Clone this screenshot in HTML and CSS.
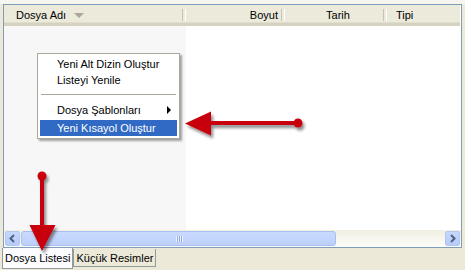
FILE: index.html
```html
<!DOCTYPE html>
<html>
<head>
<meta charset="utf-8">
<link rel="stylesheet" href="styles.css">
</head>
<body>
<div class="window">
  <div class="listview">
    <div class="header">
      <div class="col c-name">Dosya Adı <span class="sort"></span></div>
      <div class="col c-size">Boyut</div>
      <div class="col c-date">Tarih</div>
      <div class="col c-type">Tipi</div>
    </div>
    <div class="body">
      <div class="sorted"></div>
      <div class="rest"></div>
    </div>
    <div class="hscroll">
      <div class="btn left"><svg width="15" height="15" viewBox="0 0 15 15"><path d="M9 4 L5.5 7.5 L9 11" fill="none" stroke="#4d6185" stroke-width="2"/></svg></div>
      <div class="track">
        <div class="thumb"><span class="grip"></span></div>
      </div>
      <div class="btn right"><svg width="15" height="15" viewBox="0 0 15 15"><path d="M6 4 L9.5 7.5 L6 11" fill="none" stroke="#4d6185" stroke-width="2"/></svg></div>
    </div>
  </div>
  <div class="tabs">
    <div class="tab active">Dosya Listesi</div>
    <div class="tab">Küçük Resimler</div>
  </div>

  <div class="menu">
    <div class="item">Yeni Alt Dizin Oluştur</div>
    <div class="item">Listeyi Yenile</div>
    <div class="sep"></div>
    <div class="item sub">Dosya Şablonları <span class="subarrow"></span></div>
    <div class="item hl">Yeni Kısayol Oluştur</div>
  </div>

  <svg class="arrows" width="465" height="270" viewBox="0 0 465 270">
    <defs>
      <filter id="sh" x="-20%" y="-20%" width="140%" height="140%">
        <feGaussianBlur in="SourceAlpha" stdDeviation="1.6"/>
        <feOffset dx="2" dy="3"/>
        <feComponentTransfer><feFuncA type="linear" slope="0.45"/></feComponentTransfer>
        <feMerge><feMergeNode/><feMergeNode in="SourceGraphic"/></feMerge>
      </filter>
    </defs>
    <g filter="url(#sh)" fill="#c8000a">
      <rect x="205" y="121" width="93" height="4"/>
      <circle cx="298" cy="123" r="4.5"/>
      <path d="M185 123.5 L211 111.5 L211 135.5 Z"/>
      <rect x="40" y="176" width="4" height="52"/>
      <circle cx="42" cy="176" r="4.5"/>
      <path d="M42 251 L29.5 225 L55.5 225 Z"/>
    </g>
  </svg>
</div>
</body>
</html>
```
FILE: styles.css
```css
* { box-sizing: border-box; }
html, body { margin: 0; padding: 0; }
body {
  width: 465px;
  height: 270px;
  background: #ece9d8;
  font-family: Tahoma, "Liberation Sans", Arial, sans-serif;
  font-size: 11px;
  color: #000;
  overflow: hidden;
}
.window {
  position: relative;
  width: 465px;
  height: 270px;
  padding: 4px 3px 0 3px;
  background: linear-gradient(#f6f5ef 0 4px, #ece9d8 4px);
  display: flex;
  flex-direction: column;
}
.listview {
  height: 244px;
  border: 1px solid #7f9db9;
  background: #fff;
  display: flex;
  flex-direction: column;
}
.header {
  height: 21px;
  display: flex;
  background: #ebeadb;
  border-bottom: 3px solid #d6d2c2;
  box-shadow: inset 0 -1px 0 #e2decd;
  margin-right: 1px;
}
.col {
  display: flex;
  align-items: center;
  padding-top: 1px;
  position: relative;
}
.col::after {
  content: "";
  position: absolute;
  right: 0;
  top: 4px;
  bottom: 2px;
  width: 2px;
  border-left: 1px solid #c7c5b2;
  border-right: 1px solid #fff;
}
.c-name { width: 182px; padding-left: 12px; }
.c-size { width: 99px; justify-content: flex-end; padding-right: 7px; }
.c-date { width: 102px; justify-content: center; padding-left: 4px; }
.c-type { flex: 1; padding-left: 9px; }
.c-type::after { display: none; }
.sort {
  display: inline-block;
  width: 0; height: 0;
  margin-left: 8px;
  margin-top: 1px;
  border-left: 5px solid transparent;
  border-right: 5px solid transparent;
  border-top: 5px solid #aca899;
}
.body {
  flex: 1;
  display: flex;
}
.sorted { width: 182px; background: #f7f7f7; }
.rest { flex: 1; background: #fff; }
.hscroll {
  height: 17px;
  display: flex;
  align-items: center;
  padding: 1px;
  background: linear-gradient(#f1efe2, #fdfdfa);
}
.btn {
  width: 15px;
  height: 15px;
  border: 1px solid #b4c7f0;
  border-radius: 2px;
  background: linear-gradient(#c5d7fd, #b6cbf8);
  display: flex;
}
.btn svg { margin: -1px; }
.track {
  flex: 1;
  height: 15px;
  padding: 0 1px;
  display: flex;
}
.thumb {
  width: 315px;
  height: 15px;
  border: 1px solid #a9bff2;
  border-radius: 3px;
  background: linear-gradient(#c9dafd, #bcd0fb);
  position: relative;
}
.grip {
  position: absolute;
  left: 154px;
  top: 4px;
  width: 7px;
  height: 6px;
  background: repeating-linear-gradient(90deg, #eef3fe 0 1px, #8ea9e6 1px 2px);
}
.tabs {
  display: flex;
  height: 21px;
  margin-left: -1px;
}
.tab {
  height: 18px;
  padding: 0 2px;
  display: flex;
  align-items: center;
  border: 1px solid #919b9c;
  border-top: none;
  background: #ece9d8;
  margin-top: 1px;
}
.tab.active {
  background: #fcfcfe;
  height: 21px;
  margin-top: 0;
  padding: 0 2px 0 2px;
}
.menu {
  position: absolute;
  left: 37px;
  top: 53px;
  width: 143px;
  padding: 2px;
  background: #fff;
  border: 1px solid #aca899;
  box-shadow: 2px 2px 2px rgba(0,0,0,0.35);
}
.item {
  height: 16px;
  line-height: 16px;
  padding-left: 17px;
  position: relative;
  white-space: nowrap;
}
.sep {
  height: 1px;
  background: #aca899;
  margin: 6px 1px 7px 1px;
}
.subarrow {
  position: absolute;
  right: 6px;
  top: 4px;
  width: 0; height: 0;
  border-top: 4px solid transparent;
  border-bottom: 4px solid transparent;
  border-left: 4px solid #000;
}
.item.hl {
  background: #316ac5;
  color: #fff;
  margin-top: 2px;
}
.arrows {
  position: absolute;
  left: 0;
  top: 0;
  pointer-events: none;
}
```
